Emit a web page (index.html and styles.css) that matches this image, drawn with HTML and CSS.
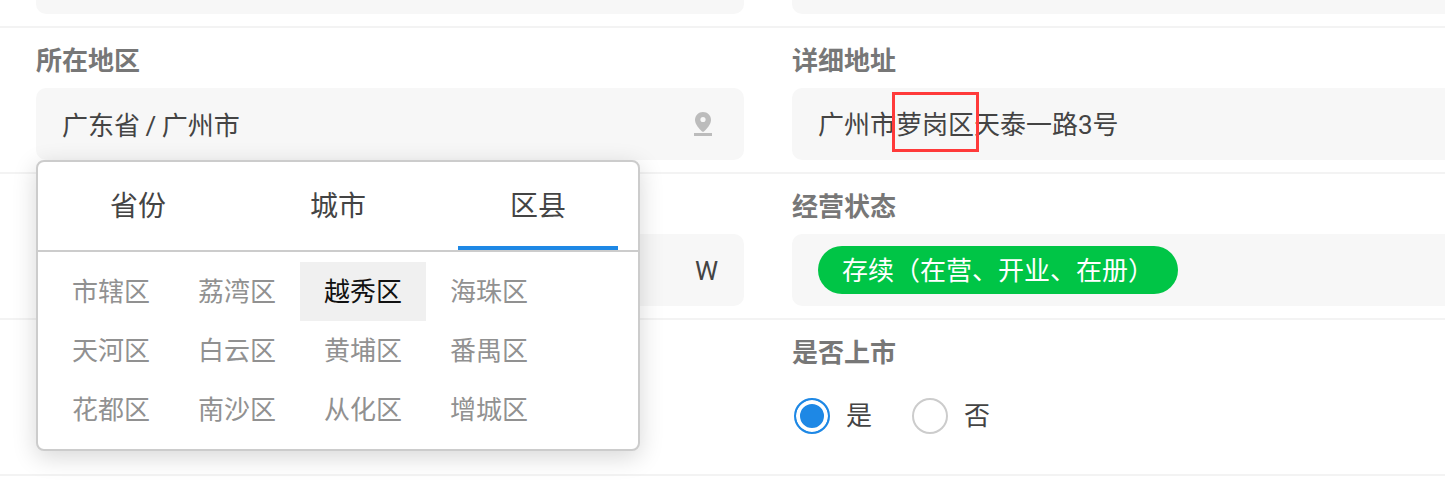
FILE: index.html
```html
<!DOCTYPE html>
<html lang="zh-CN">
  <head>
    <meta charset="UTF-8" />
    <meta name="viewport" content="width=device-width, initial-scale=1.0" />
    <title>企业信息</title>
    <link rel="stylesheet" href="styles.css">
  </head>
  <body>
    <div class="form">
      <div class="form-row form-row-top">
        <div class="field field-cut"></div>
        <div class="field field-cut"></div>
      </div>

      <div class="form-row">
        <div class="form-item">
          <div class="form-label">所在地区</div>
          <div class="field">
            <span class="field-text area-text">广东省 / 广州市</span>
            <svg class="pin-icon" width="18" height="24" viewBox="0 0 18 24">
              <path d="M9 0C4.6 0 1 3.5 1 7.9 1 12.6 6 17.8 9 20c3-2.200 8-7.400 8-12.100C17 3.500 13.400 0 9 0z" fill="#bcbcbc" />
              <circle cx="9" cy="7.500" r="2.600" fill="#f7f7f7" />
              <rect x="0" y="21" width="18" height="3" fill="#bcbcbc" />
            </svg>
          </div>
        </div>
        <div class="form-item">
          <div class="form-label">详细地址</div>
          <div class="field">
            <span class="field-text">广州市萝岗区天泰一路3号</span>
            <div class="mark-box"></div>
          </div>
        </div>
      </div>

      <div class="form-row">
        <div class="form-item">
          <div class="form-label"></div>
          <div class="field field-unit">
            <span class="field-text">W</span>
          </div>
        </div>
        <div class="form-item">
          <div class="form-label">经营状态</div>
          <div class="field">
            <span class="status-pill">存续（在营、开业、在册）</span>
          </div>
        </div>
      </div>

      <div class="form-row form-row-last">
        <div class="form-item"></div>
        <div class="form-item">
          <div class="form-label">是否上市</div>
          <div class="radio-group">
            <div class="radio checked"><i></i>是</div>
            <div class="radio"><i></i>否</div>
          </div>
        </div>
      </div>

      <div class="area-popup">
        <div class="area-tabs">
          <div class="area-tab">省份</div>
          <div class="area-tab">城市</div>
          <div class="area-tab active">区县</div>
        </div>
        <div class="area-list">
          <div class="area-item">市辖区</div>
          <div class="area-item">荔湾区</div>
          <div class="area-item selected">越秀区</div>
          <div class="area-item">海珠区</div>
          <div class="area-item">天河区</div>
          <div class="area-item">白云区</div>
          <div class="area-item">黄埔区</div>
          <div class="area-item">番禺区</div>
          <div class="area-item">花都区</div>
          <div class="area-item">南沙区</div>
          <div class="area-item">从化区</div>
          <div class="area-item">增城区</div>
        </div>
      </div>
    </div>
  </body>
</html>
```

FILE: styles.css
```css
* {
  box-sizing: border-box;
  font-family: Roboto, "Noto Sans CJK SC", sans-serif;
}

html,
body {
  margin: 0;
  height: 490px;
  overflow: hidden;
  background: white;
}

.form {
  position: relative;
  width: 1536px;
}

.form-row {
  display: grid;
  grid-template-columns: 708px 708px;
  column-gap: 48px;
  height: 146px;
  padding: 0 36px;
  border-bottom: 2px solid #f3f3f3;
}

.form-row-top {
  height: 28px;
}

.form-row-last {
  height: 156px;
}

.form-label {
  height: 60px;
  padding-top: 15px;
  font-size: 26px;
  line-height: 36px;
  font-weight: bold;
  color: #777;
}

.field {
  position: relative;
  display: flex;
  align-items: center;
  justify-content: space-between;
  height: 72px;
  padding: 0 26px;
  border-radius: 10px;
  background: #f7f7f7;
  font-size: 26px;
  line-height: 36px;
  color: #444;
}

.field-cut {
  height: 14px;
  border-radius: 0 0 10px 10px;
}

.field-unit {
  justify-content: flex-end;
}

.field-text {
  padding-top: 2px;
}

.area-text {
  padding-top: 4px;
  word-spacing: -1px;
}

.pin-icon {
  display: block;
  margin-right: 6px;
}

.mark-box {
  position: absolute;
  left: 100px;
  top: 4px;
  width: 87px;
  height: 60px;
  border: 3px solid #ff3a3a;
}

.status-pill {
  width: 360px;
  height: 48px;
  padding: 0 24px;
  border-radius: 24px;
  background: #00c546;
  color: white;
  line-height: 50px;
  white-space: nowrap;
}

.radio-group {
  display: flex;
  gap: 40px;
  padding: 18px 2px 0;
}

.radio {
  display: flex;
  align-items: center;
  gap: 16px;
  height: 36px;
  font-size: 26px;
  line-height: 34px;
  color: #444;
}

.radio i {
  display: block;
  width: 36px;
  height: 36px;
  border: 2px solid #ccc;
  border-radius: 50%;
}

.radio.checked i {
  border-color: #1e88e5;
  background: #1e88e5;
  box-shadow: inset 0 0 0 4px white;
}

.area-popup {
  position: absolute;
  left: 36px;
  top: 160px;
  width: 604px;
  height: 291px;
  border: 2px solid #ccc;
  border-radius: 8px;
  background: white;
  box-shadow: 0 6px 24px rgba(0, 0, 0, 0.16);
}

.area-tabs {
  display: grid;
  grid-template-columns: repeat(3, 200px);
  height: 90px;
  border-bottom: 2px solid #ccc;
}

.area-tab {
  height: 88px;
  margin: 0 20px;
  border-bottom: 4px solid transparent;
  font-size: 28px;
  line-height: 90px;
  text-align: center;
  color: #444;
}

.area-tab.active {
  border-bottom-color: #1e88e5;
}

.area-list {
  display: flex;
  flex-wrap: wrap;
  padding: 10px;
}

.area-item {
  width: 126px;
  height: 59px;
  font-size: 26px;
  line-height: 60px;
  text-align: center;
  color: #919191;
}

.area-item.selected {
  background: #f0f0f0;
  color: #111;
}
```
